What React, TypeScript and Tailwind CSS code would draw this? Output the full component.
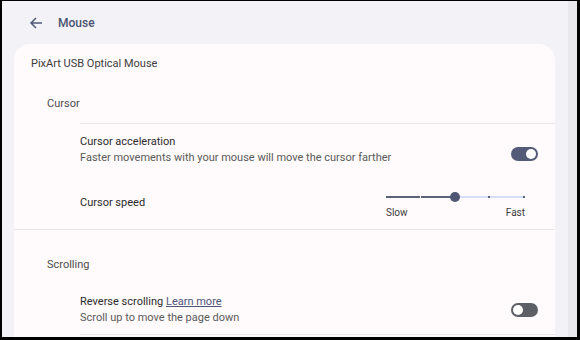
import React from "react";

function Toggle({ on }: { on: boolean }) {
  return (
    <div
      className={
        "relative w-[27px] h-[14px] rounded-full " +
        (on ? "bg-[#545b78]" : "bg-[#5d5f66]")
      }
    >
      <div
        className={
          "absolute top-[2px] w-[10px] h-[10px] rounded-full bg-white " +
          (on ? "right-[2px]" : "left-[2px]")
        }
      />
    </div>
  );
}

function Slider() {
  return (
    <div className="w-[139px] flex flex-col">
      <div className="relative h-[12px]">
        <div className="absolute left-0 right-0 top-[5px] h-[2px] bg-[#d3def6]" />
        <div className="absolute left-0 w-[69px] top-[5px] h-[2px] bg-[#5a6179]" />
        <div className="absolute left-[34px] top-[5px] w-[1px] h-[2px] bg-[#fffafb]" />
        <div className="absolute left-[102px] top-[5px] w-[2px] h-[2px] bg-[#5a6179]" />
        <div className="absolute left-[137px] top-[5px] w-[2px] h-[2px] bg-[#5a6179]" />
        <div className="absolute left-[64px] top-[1px] w-[10px] h-[10px] rounded-full bg-[#4f5673]" />
      </div>
      <div className="flex justify-between mt-[3px] text-[10px] leading-[14px] text-[#3c3c3c]">
        <span>Slow</span>
        <span>Fast</span>
      </div>
    </div>
  );
}

export default function App() {
  return (
    <div
      className="w-[580px] h-[340px] bg-black pt-[1px] pl-[2px] pr-[3px] pb-[3px]"
      style={{ fontFamily: "Roboto, 'Noto Sans', sans-serif" }}
    >
      <div className="flex h-full bg-[#f3f2f6] overflow-hidden">
        <div className="flex-1 flex flex-col min-w-0">
          <div className="h-[43px] flex items-center pl-[27px] shrink-0">
            <svg width="14" height="14" viewBox="0 0 14 14" className="mt-[1px]">
              <path
                d="M13 7H2M7 2L2 7l5 5"
                fill="none"
                stroke="#525a79"
                strokeWidth="1.5"
              />
            </svg>
            <span className="ml-[15px] mt-[1px] text-[12px] font-medium text-[#4b5270] leading-[20px]">
              Mouse
            </span>
          </div>
          <div className="flex-1 ml-[12px] mr-[13px] rounded-t-[16px] bg-[#fffafb] flex flex-col">
            <div className="pl-[17px] mt-[10px] text-[11px] leading-[20px] text-[#3d3d3d]">
              PixArt USB Optical Mouse
            </div>
            <div className="pl-[33px] mt-[20px] text-[11px] leading-[20px] text-[#4d4d4d]">
              Cursor
            </div>
            <div className="ml-[66px] mt-[9px] border-t border-[#ebe6e8]">
              <div className="flex items-center pt-[9px] h-[51px] pr-[17px]">
                <div className="flex-1 self-start">
                  <div className="text-[11px] leading-[17px] text-[#2b2b2b]">
                    Cursor acceleration
                  </div>
                  <div className="text-[11px] leading-[16px] text-[#5a5a5a]">
                    Faster movements with your mouse will move the cursor farther
                  </div>
                </div>
                <Toggle on />
              </div>
              <div className="flex items-start h-[54px] pr-[30px]">
                <div className="flex-1 mt-[19px] text-[11px] leading-[18px] text-[#2b2b2b]">
                  Cursor speed
                </div>
                <div className="mt-[16px]">
                  <Slider />
                </div>
              </div>
            </div>
            <div className="border-t border-[#ebe6e8]" />
            <div className="pl-[33px] mt-[25px] text-[11px] leading-[20px] text-[#4d4d4d]">
              Scrolling
            </div>
            <div className="ml-[66px] mt-[18px]">
              <div className="flex items-center pr-[17px]">
                <div className="flex-1">
                  <div className="text-[11px] leading-[17px] text-[#2b2b2b]">
                    Reverse scrolling{" "}
                    <span className="text-[#4d5578] underline">Learn more</span>
                  </div>
                  <div className="text-[11px] leading-[16px] text-[#5a5a5a]">
                    Scroll up to move the page down
                  </div>
                </div>
                <Toggle on={false} />
              </div>
              <div className="mt-[8px] border-t border-[#ebe6e8]" />
            </div>
          </div>
        </div>
        <div className="w-[9px] bg-[#e9e8ed] shrink-0" />
      </div>
    </div>
  );
}
